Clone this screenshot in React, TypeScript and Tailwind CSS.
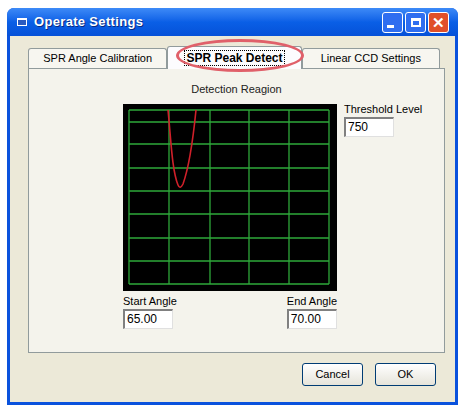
export default function App() {
  const xs = [130, 170, 211, 250, 290, 330];
  const ys = [110, 122, 144, 168, 191, 214, 238, 261, 284];
  const input = "h-[20px] bg-white border-t-2 border-l-2 border-t-[#808080] border-l-[#808080] border-b border-r border-b-[#e0e0e0] border-r-[#e0e0e0] px-[2px] text-[12px] leading-[16px]";
  return (
    <div className="w-[467px] h-[407px] bg-white pt-[8px] pl-[7px]" style={{ fontFamily: "'Liberation Sans', Arial, sans-serif" }}>
      <div className="w-[451px] h-[397px] bg-[#0a52dd] rounded-t-[7px] p-[3px] pt-0 flex flex-col">
        {/* title bar */}
        <div className="h-[28px] flex items-center bg-gradient-to-b from-[#3d8af7] via-[#0a5fe6] to-[#0651d8] rounded-t-[7px] -mx-[3px] px-[9px]">
          <svg width="12" height="12" viewBox="0 0 12 12"><rect x="1" y="2" width="10" height="8" fill="#fff" /><rect x="2" y="4" width="8" height="5" fill="#2a5bc0" /></svg>
          <span className="ml-[6px] text-white font-bold text-[13px] tracking-wide" style={{ textShadow: "1px 1px #0a2a80" }}>Operate Settings</span>
          <div className="ml-auto flex gap-[2px]">
            {["min", "max"].map((k) => (
              <div key={k} className="w-[21px] h-[21px] rounded-[3px] border border-white bg-[#2f6ef0] flex items-center justify-center">
                {k === "min" ? <div className="w-[7px] h-[3px] bg-white mt-[8px] -ml-[4px]" /> : <div className="w-[10px] h-[9px] border-2 border-white border-t-[3px]" />}
              </div>
            ))}
            <div className="w-[21px] h-[21px] rounded-[3px] border border-white bg-[#e0502a] flex items-center justify-center text-white font-bold text-[15px] leading-none">✕</div>
          </div>
        </div>
        {/* body */}
        <div className="relative flex-1 bg-[#ece9d8] flex flex-col pt-[10px] px-[15px]">
          <div className="flex items-end h-[22px] text-[11px] ml-[3px]">
            <div className="w-[140px] h-[20px] border border-[#919b9c] border-b-0 rounded-t-[3px] bg-[#f7f6f0] flex items-center justify-center">SPR Angle Calibration</div>
            <div className="w-[135px] h-[23px] border border-[#919b9c] border-b-0 rounded-t-[3px] bg-[#fcfcfe] flex items-center justify-center font-bold text-[12px] relative z-10 -mb-px">
              <span className="border border-dotted border-black px-px leading-[14px]">SPR Peak Detect</span>
            </div>
            <div className="w-[139px] h-[20px] border border-[#919b9c] border-b-0 rounded-t-[3px] bg-[#f7f6f0] flex items-center justify-center">Linear CCD Settings</div>
          </div>
          <div className="absolute left-[166px] top-[3px] w-[128px] h-[33px] rounded-[50%] border-[3px] border-[#e0606a] z-20" />
          <div className="h-[285px] w-[417px] ml-[3px] border border-[#919b9c] bg-[#f4f3ec] relative text-[11px]">
            <div className="text-center mt-[13px] leading-[14px] text-[#222]">Detection Reagion</div>
            <div className="flex mt-[8px] ml-[94px]">
              <svg width="214" height="187" viewBox="124 104 214 187" className="bg-black">
                <rect x="124" y="104" width="214" height="187" fill="#000" />
                {xs.map((x) => <line key={x} x1={x} y1={110} x2={x} y2={284} stroke="#2ea83a" strokeWidth="1.3" />)}
                {ys.map((y) => <line key={y} x1={130} y1={y} x2={330} y2={y} stroke="#2ea83a" strokeWidth="1.3" />)}
                <path d="M169 110 C172 140 173 170 179 185 Q181 190 184 184 C189 170 194 140 197 110" fill="none" stroke="#d0202a" strokeWidth="1.6" />
              </svg>
              <div className="ml-[7px] -mt-[2px]">
                <div className="leading-[14px]">Threshold Level</div>
                <div className={`${input} w-[50px] mt-[1px]`}>750</div>
              </div>
            </div>
            <div className="flex w-[214px] ml-[94px] justify-between mt-[3px]">
              <div>
                <div className="leading-[14px]">Start Angle</div>
                <div className={`${input} w-[50px] mt-[1px]`}>65.00</div>
              </div>
              <div>
                <div className="leading-[14px]">End Angle</div>
                <div className={`${input} w-[50px] mt-[1px]`}>70.00</div>
              </div>
            </div>
          </div>
          <div className="flex justify-end gap-[12px] mt-[10px] mr-[4px] text-[11px]">
            {["Cancel", "OK"].map((t) => (
              <div key={t} className="w-[61px] h-[23px] rounded-[3px] border border-[#003c74] bg-gradient-to-b from-white to-[#e6e4da] flex items-center justify-center">{t}</div>
            ))}
          </div>
        </div>
      </div>
    </div>
  );
}
